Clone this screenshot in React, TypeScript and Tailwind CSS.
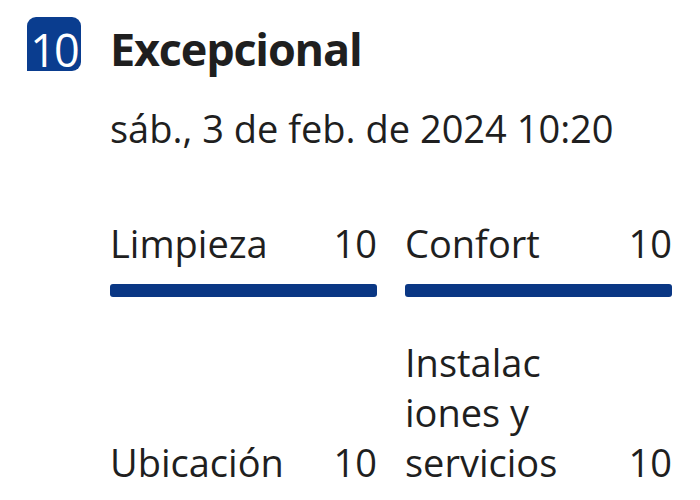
import React from 'react';

interface Score {
  label: React.ReactNode;
  key: string;
  value: number;
  bar?: boolean;
  labelClass: string;
}

const rows: Score[][] = [
  [
    { key: 'limpieza', label: 'Limpieza', value: 10, bar: true, labelClass: 'flex-1' },
    { key: 'confort', label: 'Confort', value: 10, bar: true, labelClass: 'flex-1' },
  ],
  [
    { key: 'ubicacion', label: 'Ubicación', value: 10, labelClass: 'flex-1' },
    {
      key: 'instalaciones',
      label: (
        <>
          Instalac<wbr />iones y servicios
        </>
      ),
      value: 10,
      labelClass: 'w-[158px]',
    },
  ],
];

const ScoreCell: React.FC<{ score: Score }> = ({ score }) => (
  <div className="flex flex-col">
    <div className="flex items-end justify-between leading-[50px]">
      <span className={`${score.labelClass} min-w-0 break-words`}>{score.label}</span>
      <span className="shrink-0">{score.value}</span>
    </div>
    {score.bar && <div className="mt-[16px] h-[13px] rounded-[3px] bg-[#0a3784]" />}
  </div>
);

export default function App() {
  return (
    <div
      className="h-[500px] w-[700px] overflow-hidden bg-white text-[#1f1f1f]"
      style={{ fontFamily: '"Open Sans", "Noto Sans", sans-serif' }}
    >
      <div className="flex gap-[29px] pl-[27px] pt-[17px]">
        <div className="flex h-[54px] w-[54px] shrink-0 items-start justify-center rounded-t-[9px] rounded-br-[9px] bg-[#0a3d8f] pt-[10px] text-[45px] leading-none tracking-[-2px] text-white">
          10
        </div>
        <div className="mt-[5px] flex flex-col">
          <h1 className="text-[45px] font-bold leading-[54px] tracking-[-1.2px]">Excepcional</h1>
          <p className="mt-[29px] text-[38px] leading-[46px]">sáb., 3 de feb. de 2024 10:20</p>
        </div>
      </div>

      <div className="ml-[110px] mt-[67px] flex w-[562px] flex-col gap-[40px] text-[38px]">
        {rows.map((row, i) => (
          <div key={i} className="grid grid-cols-2 items-end gap-[28px]">
            {row.map((s) => (
              <ScoreCell key={s.key} score={s} />
            ))}
          </div>
        ))}
      </div>
    </div>
  );
}
